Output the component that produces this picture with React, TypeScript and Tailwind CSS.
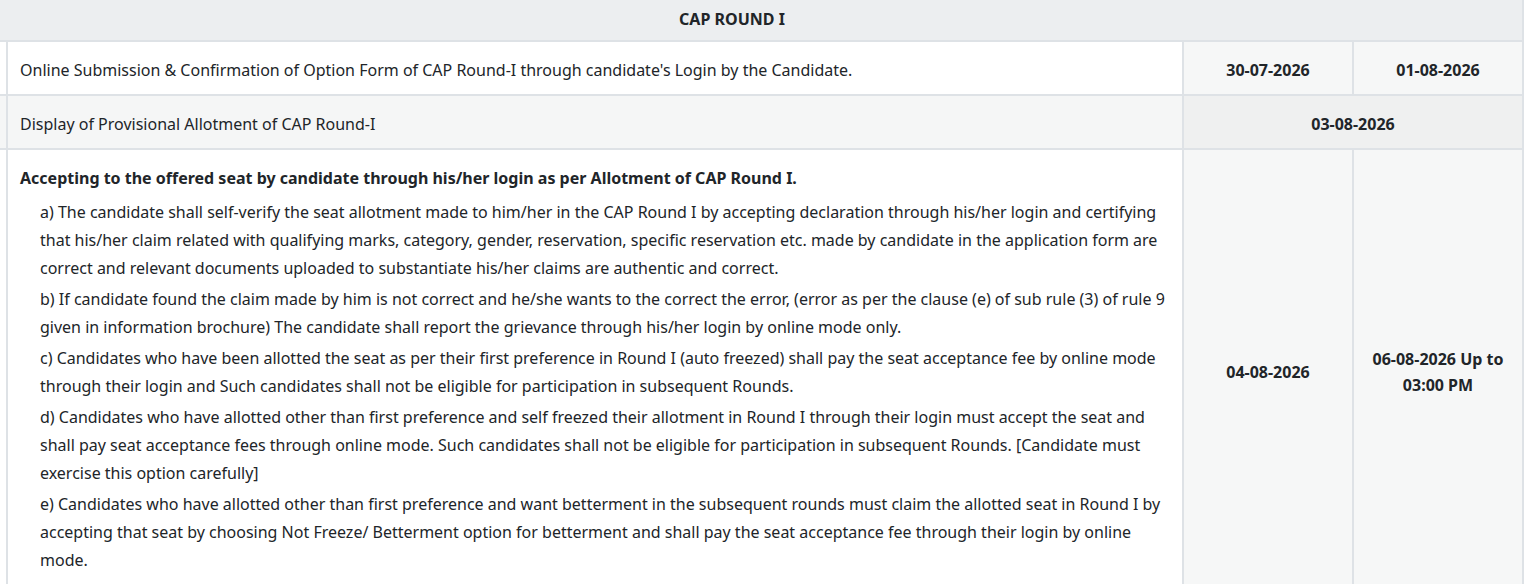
import React from 'react';

const items = [
  "a) The candidate shall self-verify the seat allotment made to him/her in the CAP Round I by accepting declaration through his/her login and certifying that his/her claim related with qualifying marks, category, gender, reservation, specific reservation etc. made by candidate in the application form are correct and relevant documents uploaded to substantiate his/her claims are authentic and correct.",
  "b) If candidate found the claim made by him is not correct and he/she wants to the correct the error, (error as per the clause (e) of sub rule (3) of rule 9 given in information brochure) The candidate shall report the grievance through his/her login by online mode only.",
  "c) Candidates who have been allotted the seat as per their first preference in Round I (auto freezed) shall pay the seat acceptance fee by online mode through their login and Such candidates shall not be eligible for participation in subsequent Rounds.",
  "d) Candidates who have allotted other than first preference and self freezed their allotment in Round I through their login must accept the seat and shall pay seat acceptance fees through online mode. Such candidates shall not be eligible for participation in subsequent Rounds. [Candidate must exercise this option carefully]",
  "e) Candidates who have allotted other than first preference and want betterment in the subsequent rounds must claim the allotted seat in Round I by accepting that seat by choosing Not Freeze/ Betterment option for betterment and shall pay the seat acceptance fee through their login by online mode.",
];

export default function App() {
  const cell = 'border-r-2 border-b-2 border-[#dee2e6]';
  const date = `${cell} flex items-center justify-center text-center font-bold px-3 pt-[14px] pb-[10px] bg-[#f6f7f7]`;

  return (
    <div className="min-h-screen bg-white text-[#212529] text-[16px] leading-[28px] font-['Noto_Sans','Open_Sans',sans-serif]">
      <div className="w-[1524px] grid grid-cols-[8px_1176px_170px_170px]">
        {/* header */}
        <div className="col-span-4 h-[42px] flex items-center justify-center pr-[58px] pb-[2px] font-bold bg-[#eceef0] border-r-2 border-b-2 border-[#dee2e6]">
          CAP ROUND I
        </div>

        {/* row 1 */}
        <div className={`${cell} bg-white`} />
        <div className={`${cell} bg-white px-3 pt-[14px] pb-[10px]`}>
          Online Submission &amp; Confirmation of Option Form of CAP Round-I through candidate's Login by the Candidate.
        </div>
        <div className={date}>30-07-2026</div>
        <div className={date}>01-08-2026</div>

        {/* row 2 */}
        <div className={`${cell} bg-[#f5f6f6]`} />
        <div className={`${cell} bg-[#f5f6f6] px-3 pt-[14px] pb-[10px]`}>Display of Provisional Allotment of CAP Round-I</div>
        <div className={`${cell} col-span-2 flex items-center justify-center font-bold pt-[4px] bg-[#eff0f0]`}>03-08-2026</div>

        {/* row 3 */}
        <div className={`${cell} bg-white`} />
        <div className={`${cell} bg-white px-3 pt-[14px] pb-[10px]`}>
          <p className="font-bold">Accepting to the offered seat by candidate through his/her login as per Allotment of CAP Round I.</p>
          <ul className="mt-[6px] mb-[6px] pl-5 flex flex-col gap-[3px]">
            {items.map((t) => (
              <li key={t}>{t}</li>
            ))}
          </ul>
        </div>
        <div className={date}>04-08-2026</div>
        <div className={`${date} leading-[26px]`}>
          06-08-2026 Up to
          <br />
          03:00 PM
        </div>
      </div>
    </div>
  );
}
